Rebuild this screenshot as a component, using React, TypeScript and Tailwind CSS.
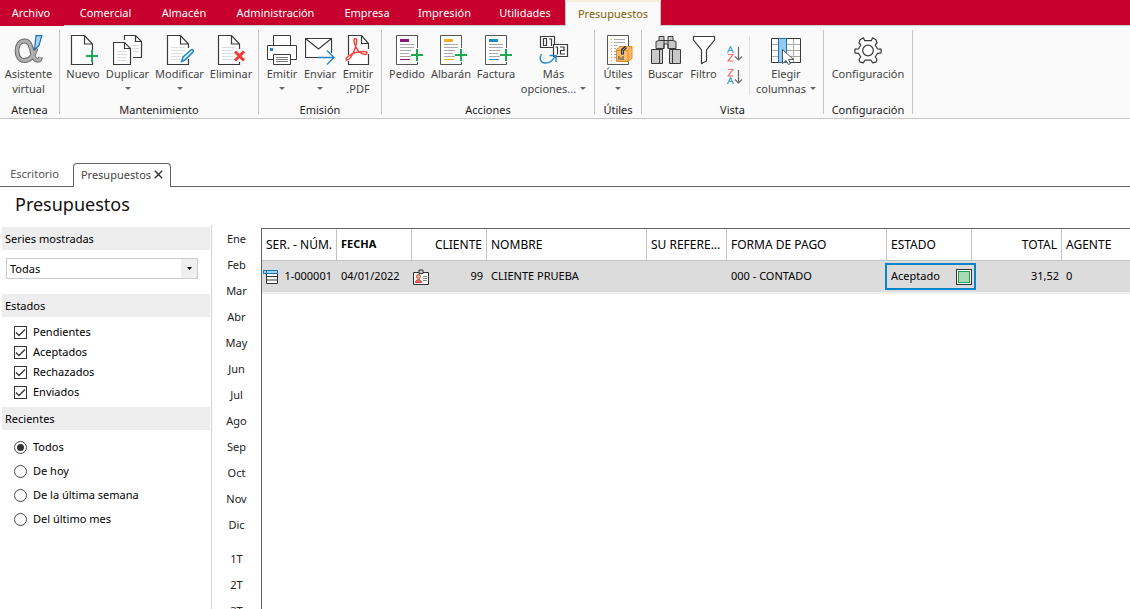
import { useState, type ReactNode } from "react";

const INK = "#3a3a3a";
const GREEN = "#1aa851";
const BLUE = "#2088c8";

function Svg({ w, h = 30, left = 0, children }: { w: number; h?: number; left?: number; children: ReactNode }) {
  return (
    <svg width={w} height={h} viewBox={`${-left} 0 ${w} ${h}`} fill="none" aria-hidden="true" className="block shrink-0">
      {children}
    </svg>
  );
}

function Plus({ x, y }: { x: number; y: number }) {
  return <path d={`M${x} ${y}h12M${x + 6} ${y - 6}v12`} stroke={GREEN} strokeWidth="2" />;
}

function AlphaIcon() {
  const bowl = "M22 13C20 20 17 25.500 10.500 25.500 5.500 25.500 3 21 3 16 3 10 6 6 10.500 6 17.500 6 17 15 19.500 21.500 21.500 26.500 26 26.500 26.500 22";
  return (
    <Svg w={30}>
      <path d={bowl} stroke="#6a6a6a" strokeWidth="4.800" />
      <path d={bowl} stroke="#b0b0b0" strokeWidth="2.800" />
      <path d="M22 .7h5.800L25 10.500l-4.500 4.500z" fill="#a6d6f6" stroke="#1c6fb5" strokeWidth="1.200" />
    </Svg>
  );
}

function NewIcon() {
  return (
    <Svg w={32} left={4}>
      <path d="M21.500 14V9L13.500.5H.5v29h21V27" fill="#fff" />
      <path d="M21.500 15V9L13.500.5H.5v29h21V27M13.500.5V9h8" stroke={INK} strokeWidth="1.200" />
      <Plus x={15} y={21} />
    </Svg>
  );
}

function DuplicateIcon() {
  return (
    <Svg w={30}>
      <path d="M11.500 5V.5h11l6 6v16H20" fill="#fff" stroke={INK} strokeWidth="1.200" />
      <path d="M22.500.5v6h6" stroke={INK} strokeWidth="1.200" />
      <path d="M19 10.500h7M19 13.500h7M20 16.500h6" stroke="#ddd" />
      <path d="M.5 7.500h11l6 6v16H.5z" fill="#fff" stroke={INK} strokeWidth="1.200" />
      <path d="M11.500 7.500v6h6" stroke={INK} strokeWidth="1.200" />
      <path d="M4 16.500h10M4 19.500h10M4 22.500h10M4 25.500h10" stroke="#ddd" />
    </Svg>
  );
}

function EditIcon() {
  return (
    <Svg w={30} left={2}>
      <path d="M.5.5h13l8 8.500v20.500H.5z" fill="#fff" />
      <path d="M21.500 13V9L13.500.5H.5v29h21V24M13.500.5V9h8" stroke={INK} strokeWidth="1.200" />
      <path d="M4 12.500h14M4 15.500h14M4 18.500h12M4 21.500h10M4 24.500h9" stroke="#ddd" />
      <path d="M14.500 26.500l1.500-4.500 8-7c1.500-1 3 .5 2 2l-8 8z" fill="#d9effb" stroke={BLUE} strokeWidth="1.500" />
    </Svg>
  );
}

function DeleteIcon() {
  return (
    <Svg w={30} left={2}>
      <path d="M.5.5h13l8 8.500v20.500H.5z" fill="#fff" />
      <path d="M21.500 14V9L13.500.5H.5v29h21V27M13.500.5V9h8" stroke={INK} strokeWidth="1.200" />
      <path d="M4 12.500h13M4 15.500h11M4 18.500h11M4 21.500h11M4 24.500h11" stroke="#ddd" />
      <path d="M17 16.500l9 9M26 16.500l-9 9" stroke="#ee3a36" strokeWidth="3" />
    </Svg>
  );
}

function PrintIcon() {
  return (
    <Svg w={30}>
      <path d="M6.500 10V.5h17V10" fill="#fff" stroke={INK} />
      <path d="M6 24.500H.5v-14h29v14H24" fill="#fff" stroke={INK} />
      <path d="M3 13h3v3H3z" fill={BLUE} />
      <path d="M6.500 19.500h17v10h-17z" fill="#fff" stroke={INK} />
      <path d="M9 22.500h12M9 24.500h12M9 26.500h12" stroke="#777" />
    </Svg>
  );
}

function SendIcon() {
  return (
    <Svg w={30}>
      <path d="M13 22.500H.5v-19h26V18" fill="#fff" stroke={INK} strokeWidth="1.200" />
      <path d="M.5 3.500L13.500 14l13-10.500" stroke={INK} strokeWidth="1.200" />
      <path d="M13 22.500h16M22 15.500l7 7-7 7" stroke={BLUE} strokeWidth="1.400" />
    </Svg>
  );
}

function PdfIcon() {
  return (
    <Svg w={26}>
      <path d="M3.500.5h13l7 7v22h-20z" fill="#fff" />
      <path d="M3.500 20V.5h13l7 8V14M23.500 19v10.500h-20V26" stroke={INK} strokeWidth="1.200" />
      <path d="M16.500.5v8h7" stroke={INK} strokeWidth="1.200" />
      <path
        d="M10 3.500c2.500 0 2 5-.5 11.500C7 21 3.500 26 1.500 25c-2-1.500 3.500-6 9.500-7.500 6-1.400 11-1.500 11 .5 0 2.500-5 1.500-8.500-2C10 12.500 7.500 3.500 10 3.500z"
        fill="#fff"
        stroke="#f04743"
        strokeWidth="1.500"
      />
    </Svg>
  );
}

function DocumentIcon({ color }: { color: string }) {
  return (
    <Svg w={34} left={6}>
      <path d="M.5.5h21v29H.5z" fill="#fff" />
      <path d="M21.500 13V.5H.5v29h21V27" stroke="#555" />
      <path d="M4 4h9v3H4z" fill={color} />
      <path d="M4 9.500h14M4 12.500h14M4 15.500h11M4 18.500h9M4 21.500h11" stroke="#a9a9a9" />
      <path d="M4 24.500h10" stroke={color} />
      <Plus x={15} y={20} />
    </Svg>
  );
}

function MoreIcon() {
  return (
    <Svg w={30}>
      <path d="M1.500 1.500h14v11h-14z" fill="#fff" stroke={INK} strokeWidth="1.200" />
      <path d="M4.500 3.500h3v7h-3zM10 4h2.500v7" stroke={INK} strokeWidth="1.200" />
      <path d="M14.500 9.500h14v12h-14z" fill="#fff" stroke={INK} strokeWidth="1.200" />
      <path d="M16.500 12h2v7.500M21 12h4v3.500h-3.500V19h4.500" stroke={INK} strokeWidth="1.200" />
      <path d="M2.500 19c-2.500 4-1 9 3.500 9 5 0 8.500-3 10.500-7.500M10.500 20.500h6.500V27" stroke={BLUE} strokeWidth="1.400" />
    </Svg>
  );
}

function UtilityIcon() {
  return (
    <Svg w={30} left={4}>
      <path d="M.5.5h21v29H.5z" fill="#fff" stroke="#555" />
      <path d="M4.500 4v22" stroke="#f0a030" strokeDasharray="1 2" />
      <path d="M7 4.500h11M7 7.500h11M7 10.500h3M7 13.500h2M7 16.500h2M7 19.500h2M7 22.500h2" stroke="#aaa" />
      <path d="M9.500 14.500l3.500-3h12v12l-4 3H9.500z" fill="#fdbb70" stroke="#e58a1f" />
      <path d="M9.500 15.500H21l4-4M21 15.500v11" stroke="#e58a1f" />
      <path d="M19 12l-3.500 3v4.500" stroke={INK} strokeWidth="3" />
      <path d="M18.500 12.500l-3 3v3" stroke="#999" />
      <path d="M12 21v4M14 22.500V25M16 21v4" stroke="#444" />
    </Svg>
  );
}

function SearchIcon() {
  return (
    <Svg w={30}>
      <path d="M8 1.500h5v4h4v-4h5v4l3 1v7H17V9h-4v4.500H5v-7l3-1z" fill="#c9c9c9" stroke={INK} />
      <path d="M8 5.500h5v8M22 5.500h-5v8" stroke={INK} />
      <path d="M.5 14.500h11v14H.5zM18.500 14.500h11v14h-11z" fill="#c9c9c9" stroke={INK} />
      <path d="M8.500 15v13M21.500 15v13" stroke={INK} />
    </Svg>
  );
}

function FilterIcon() {
  return (
    <Svg w={24}>
      <path d="M1.500 1.500h21V5L14.500 15v11l-5 2.500V15L1.500 5z" fill="#fff" stroke={INK} strokeWidth="1.200" />
    </Svg>
  );
}

function SortIcon({ descending }: { descending?: boolean }) {
  const a = descending ? 8 : 0;
  const z = descending ? 0 : 8;
  return (
    <Svg w={16} h={16}>
      <path d={`M.5 ${a + 7}L3.500 ${a + 0.5}l3 6.500M1.500 ${a + 4.500}h4`} stroke="#4b9fd5" strokeWidth="1.200" />
      <path d={`M1 ${z + 0.5}h5l-5 6.500h5.500`} stroke="#ef6a70" strokeWidth="1.200" />
      <path d="M11.500 1v13M8 10.500l3.500 3.500 3.500-3.500" stroke="#666" strokeWidth="1.200" />
    </Svg>
  );
}

function ColumnsIcon() {
  return (
    <Svg w={30}>
      <path d="M.5 3.500h29v24H.5z" fill="#fff" />
      <path d="M22.500 4v23M1 9.500h28M1 15.500h28M1 21.500h28" stroke="#aaa" />
      <path d="M.5 3.500h29v24H.5z" stroke={INK} />
      <path d="M7.500 3.500h8v24h-8z" fill="#93cbf1" stroke="#1c72b8" />
      <path d="M11.500 14.500v14l3.500-3 2.500 4 2-1-2-4h5z" fill="#fff" stroke="#555" />
    </Svg>
  );
}

function GearIcon() {
  return (
    <Svg w={30}>
      <path
        d="M11.600 5.600L10.500 2.800 7 4.800l-1 3 1.800 2.200-2.300 3.800-3.600.4v3.600l3.600.5L7.800 22 6 24.400l1 2.800 3.500.6 1.400-2.600h6.200l1.400 2.600 3.500-.6 1-2.800-1.800-2.400 2.300-3.700 3.600-.5v-3.600l-3.600-.4-2.300-3.800L24 7.800l-1-3-3.500-2-1.100 2.800z"
        fill="#fff"
        stroke={INK}
        strokeWidth="1.200"
        strokeLinejoin="round"
      />
      <circle cx="15" cy="15.500" r="5.300" stroke={INK} strokeWidth="1.200" />
    </Svg>
  );
}

function Caret() {
  return (
    <svg width="6" height="3" viewBox="0 0 6 3" aria-hidden="true" className="inline-block shrink-0">
      <path d="M0 0h6L3 3z" fill="#666" />
    </svg>
  );
}

function Tool({ icon, lines, width, menu }: { icon: ReactNode; lines: string[]; width: string; menu?: boolean }) {
  return (
    <button type="button" className={`flex flex-col items-center text-[11px] leading-[15px] text-[#444] ${width}`}>
      {icon}
      <span className="mt-px whitespace-nowrap">{lines[0]}</span>
      {(lines[1] || menu) && (
        <span className="flex h-[15px] items-center gap-1 whitespace-nowrap">
          {lines[1]}
          {menu && <Caret />}
        </span>
      )}
    </button>
  );
}

function Group({ label, width, pad = "", children }: { label: string; width: string; pad?: string; children: ReactNode }) {
  return (
    <>
      <section aria-label={label} className={`flex h-[86px] shrink-0 flex-col justify-between ${width}`}>
        <div className={`flex items-start pt-[5px] ${pad}`}>{children}</div>
        <h2 className="text-center text-[11px] leading-[12px] text-[#222]">{label}</h2>
      </section>
      <div className="h-[84px] w-px shrink-0 bg-[#c6c6c6]" />
    </>
  );
}

const MENU = [
  { label: "Comercial", width: "w-[83px]" },
  { label: "Almacén", width: "w-[74px]" },
  { label: "Administración", width: "w-[109px]" },
  { label: "Empresa", width: "w-[74px]" },
  { label: "Impresión", width: "w-[81px]" },
  { label: "Utilidades", width: "w-[80px]" },
];

function MenuBar() {
  return (
    <nav className="flex h-[26px] bg-[#c8002d] text-[11px] leading-[26px] text-white">
      <button type="button" className="w-16 shrink-0 pr-0.5">Archivo</button>
      {MENU.map((item) => (
        <button key={item.label} type="button" className={`shrink-0 border-b border-[#d0cfcf] ${item.width}`}>
          {item.label}
        </button>
      ))}
      <button
        type="button"
        className="w-24 shrink-0 border-x border-t-2 border-[#c6c6c6] border-t-[#f5f0dc] bg-[#fafafa] leading-[24px] text-[#806000]"
      >
        Presupuestos
      </button>
      <div className="flex-1 border-b border-[#d0cfcf]" />
    </nav>
  );
}

function Ribbon() {
  return (
    <div className="flex h-[93px] items-start border-b border-[#c6c6c6] bg-[#fafafa] pt-1">
      <Group label="Atenea" width="w-[59px]">
        <Tool icon={<AlphaIcon />} lines={["Asistente", "virtual"]} width="w-[57px]" />
      </Group>
      <Group label="Mantenimiento" width="w-[198px]" pad="pl-0.5">
        <Tool icon={<NewIcon />} lines={["Nuevo"]} width="w-[42px]" />
        <Tool icon={<DuplicateIcon />} lines={["Duplicar"]} width="w-[47px]" menu />
        <Tool icon={<EditIcon />} lines={["Modificar"]} width="w-[57px]" menu />
        <Tool icon={<DeleteIcon />} lines={["Eliminar"]} width="w-[46px]" />
      </Group>
      <Group label="Emisión" width="w-[122px]" pad="pl-1">
        <Tool icon={<PrintIcon />} lines={["Emitir"]} width="w-[38px]" menu />
        <Tool icon={<SendIcon />} lines={["Enviar"]} width="w-[38px]" menu />
        <Tool icon={<PdfIcon />} lines={["Emitir", ".PDF"]} width="w-[38px]" />
      </Group>
      <Group label="Acciones" width="w-[212px]" pad="pl-[3px]">
        <Tool icon={<DocumentIcon color="#8a1380" />} lines={["Pedido"]} width="w-[44px]" />
        <Tool icon={<DocumentIcon color="#f5ab2e" />} lines={["Albarán"]} width="w-[44px]" />
        <Tool icon={<DocumentIcon color={BLUE} />} lines={["Factura"]} width="w-[46px]" />
        <Tool icon={<MoreIcon />} lines={["Más", "opciones..."]} width="w-[69px]" menu />
      </Group>
      <Group label="Útiles" width="w-[46px]">
        <Tool icon={<UtilityIcon />} lines={["Útiles"]} width="w-[46px]" menu />
      </Group>
      <Group label="Vista" width="w-[181px]" pad="pl-0.5">
        <Tool icon={<SearchIcon />} lines={["Buscar"]} width="w-[43px]" />
        <Tool icon={<FilterIcon />} lines={["Filtro"]} width="w-[33px]" />
        <div className="flex w-[29px] flex-col items-center gap-[7px] pt-[11px]">
          <button type="button" aria-label="Orden ascendente"><SortIcon /></button>
          <button type="button" aria-label="Orden descendente"><SortIcon descending /></button>
        </div>
        <div className="mt-px h-[59px] w-px bg-[#e0e0e0]" />
        <Tool icon={<ColumnsIcon />} lines={["Elegir", "columnas"]} width="w-[72px]" menu />
      </Group>
      <Group label="Configuración" width="w-[88px]">
        <Tool icon={<GearIcon />} lines={["Configuración"]} width="w-[88px]" />
      </Group>
    </div>
  );
}

function DocumentTabs() {
  return (
    <div className="mt-11 flex h-6 shrink-0 text-[11px] leading-[20px] text-[#555]">
      <button type="button" className="w-[73px] border-b border-[#626266] pb-0.5 pr-1">Escritorio</button>
      <div className="flex w-[98px] items-center justify-center gap-[3px] rounded-t-[4px] border border-b-0 border-[#626266] pb-0.5 text-[#444]">
        <span>Presupuestos</span>
        <button type="button" aria-label="Cerrar pestaña">
          <svg width="9" height="9" viewBox="0 0 9 9" aria-hidden="true">
            <path d="M.8.8l7.400 7.400M8.200.8L.8 8.200" stroke="#333" strokeWidth="1.400" />
          </svg>
        </button>
      </div>
      <div className="flex-1 border-b border-[#626266]" />
    </div>
  );
}

function PanelTitle({ children }: { children: ReactNode }) {
  return <h3 className="ml-0.5 mr-px h-[23px] bg-[#ededed] pl-[3px] leading-[23px]">{children}</h3>;
}

function CheckRow({ label }: { label: string }) {
  return (
    <label className="flex h-5 items-center gap-[6px]">
      <span className="grid size-[13px]">
        <input
          type="checkbox"
          defaultChecked
          className="peer size-[13px] appearance-none border border-[#333] bg-white [grid-area:1/1]"
        />
        <svg
          width="13"
          height="13"
          viewBox="0 0 13 13"
          aria-hidden="true"
          className="pointer-events-none invisible [grid-area:1/1] peer-checked:visible"
        >
          <path d="M2 6.500l3 3 6-6" fill="none" stroke="#333" strokeWidth="1.300" />
        </svg>
      </span>
      {label}
    </label>
  );
}

function RadioRow({ label, checked, onPick }: { label: string; checked: boolean; onPick: () => void }) {
  return (
    <label className="flex h-6 items-center gap-[6px]">
      <input
        type="radio"
        name="recientes"
        checked={checked}
        onChange={onPick}
        className="size-[13px] appearance-none rounded-full border border-[#444] bg-white bg-clip-content p-0.5 checked:bg-[#333]"
      />
      {label}
    </label>
  );
}

function Filters() {
  const [recent, setRecent] = useState("Todos");
  return (
    <aside className="mt-[2px] w-[211px] shrink-0 text-[11px] text-black">
      <PanelTitle>Series mostradas</PanelTitle>
      <div className="ml-1.5 mt-2 grid h-[21px] w-[192px] border border-[#ccc]">
        <select aria-label="Series mostradas" className="appearance-none bg-white pl-[3px] leading-[19px] [grid-area:1/1]">
          <option>Todas</option>
        </select>
        <span className="pointer-events-none flex w-4 items-center justify-center justify-self-end bg-[#efefef] [grid-area:1/1]">
          <svg width="5" height="3" viewBox="0 0 5 3" aria-hidden="true">
            <path d="M0 0h5L2.500 3z" fill="#000" />
          </svg>
        </span>
      </div>
      <div className="mt-[15px]">
        <PanelTitle>Estados</PanelTitle>
        <div className="py-[5px] pl-3.5">
          {["Pendientes", "Aceptados", "Rechazados", "Enviados"].map((label) => (
            <CheckRow key={label} label={label} />
          ))}
        </div>
      </div>
      <PanelTitle>Recientes</PanelTitle>
      <div className="pl-3.5 pt-[5px]">
        {["Todos", "De hoy", "De la última semana", "Del último mes"].map((label) => (
          <RadioRow key={label} label={label} checked={recent === label} onPick={() => setRecent(label)} />
        ))}
      </div>
    </aside>
  );
}

const MONTHS = ["Ene", "Feb", "Mar", "Abr", "May", "Jun", "Jul", "Ago", "Sep", "Oct", "Nov", "Dic"];
const QUARTERS = ["1T", "2T", "3T"];

function Periods() {
  return (
    <div className="flex w-[50px] shrink-0 flex-col border-l border-[#d4d4d4] pt-px text-[11px] leading-[26px] text-[#222]">
      {MONTHS.map((m) => (
        <button key={m} type="button" className="h-[26px] shrink-0">{m}</button>
      ))}
      <div className="h-2 shrink-0" />
      {QUARTERS.map((q) => (
        <button key={q} type="button" className="h-[26px] shrink-0">{q}</button>
      ))}
    </div>
  );
}

function RecordIcon() {
  return (
    <svg width="15" height="14" viewBox="0 0 15 14" fill="none" aria-hidden="true">
      <path d="M3.500 3.500h11v10h-11z" fill="#fff" stroke="#333" />
      <path d="M3 6.500h12M3 10h12" stroke="#333" />
      <path d="M.5.500h14v3H.5z" fill="#9fd3f5" stroke="#1672b8" />
      <path d="M3.500.5v3" stroke="#1672b8" />
    </svg>
  );
}

function CardIcon() {
  return (
    <svg width="16" height="16" viewBox="0 0 16 16" fill="none" aria-hidden="true">
      <path d="M.5 3.500h15v12H.5z" fill="#fff" stroke="#333" />
      <path d="M6 1h4v3.500H6z" fill="#ccc" stroke="#333" />
      <circle cx="5.500" cy="7.500" r="2" fill="#f3b28f" stroke="#c2583a" />
      <path d="M2.500 13.500c0-4 6-4 6 0z" fill="#f0685e" stroke="#c43f3a" />
      <path d="M10 7.500h4M10 9.500h4M10 11.500h4" stroke="#888" />
    </svg>
  );
}

const COLUMNS = [
  { label: "SER. - NÚM.", width: "w-[75px]", cell: "font-normal" },
  { label: "FECHA", width: "w-[75px]", cell: "font-bold text-[11px]" },
  { label: "CLIENTE", width: "w-[75px]", cell: "font-normal text-right" },
  { label: "NOMBRE", width: "w-[160px]", cell: "font-normal" },
  { label: "SU REFERE...", width: "w-[80px]", cell: "font-normal" },
  { label: "FORMA DE PAGO", width: "w-[160px]", cell: "font-normal" },
  { label: "ESTADO", width: "w-[85px]", cell: "font-normal" },
  { label: "TOTAL", width: "w-[90px]", cell: "font-normal text-right" },
  { label: "AGENTE", width: "", cell: "border-r-0 font-normal" },
];

function Budgets() {
  return (
    <div className="mt-[3px] min-w-0 flex-1 overflow-hidden border-l border-t border-[#626266]">
      <table className="w-full table-fixed border-separate border-spacing-0 whitespace-nowrap text-black">
        <colgroup>
          {COLUMNS.map((c) => (
            <col key={c.label} className={c.width} />
          ))}
        </colgroup>
        <thead className="text-[12px]">
          <tr className="h-8 text-left">
            {COLUMNS.map((c) => (
              <th key={c.label} className={`border-b border-r border-[#c3c3c3] px-1 py-0 ${c.cell}`}>
                {c.label}
              </th>
            ))}
          </tr>
        </thead>
        <tbody className="text-[11px]">
          <tr className="h-[31px] bg-[#dcdcdc]">
            <td className="p-0">
              <div className="flex items-center justify-between pl-px pr-[5px]">
                <RecordIcon />
                1-000001
              </div>
            </td>
            <td className="px-1 py-0">04/01/2022</td>
            <td className="p-0">
              <div className="flex items-center justify-between pl-px pr-1">
                <CardIcon />
                99
              </div>
            </td>
            <td className="px-1 py-0">CLIENTE PRUEBA</td>
            <td />
            <td className="px-1 py-0">000 - CONTADO</td>
            <td className="p-0">
              <div className="-ml-0.5 flex h-[27px] w-[91px] items-center justify-between border-2 border-[#0a84c8] pl-1 pr-0.5">
                Aceptado
                <span className="size-4 border border-[#333] bg-white p-px">
                  <span className="block size-full border border-[#1ca350] bg-[#a9d8b4]" />
                </span>
              </div>
            </td>
            <td className="px-[3px] py-0 text-right">31,52</td>
            <td className="px-1 py-0">0</td>
          </tr>
          <tr className="h-0.5 bg-[#efefef]">
            <td colSpan={9} className="p-0" />
          </tr>
        </tbody>
      </table>
    </div>
  );
}

export default function App() {
  return (
    <div className="flex h-screen flex-col overflow-hidden bg-white font-['Noto_Sans','Open_Sans',sans-serif]">
      <header className="shrink-0">
        <MenuBar />
        <Ribbon />
      </header>
      <DocumentTabs />
      <h1 className="h-[38px] shrink-0 pl-[15px] text-[18px] leading-[34px] text-[#111]">Presupuestos</h1>
      <main className="flex min-h-0 flex-1">
        <Filters />
        <Periods />
        <Budgets />
      </main>
    </div>
  );
}
